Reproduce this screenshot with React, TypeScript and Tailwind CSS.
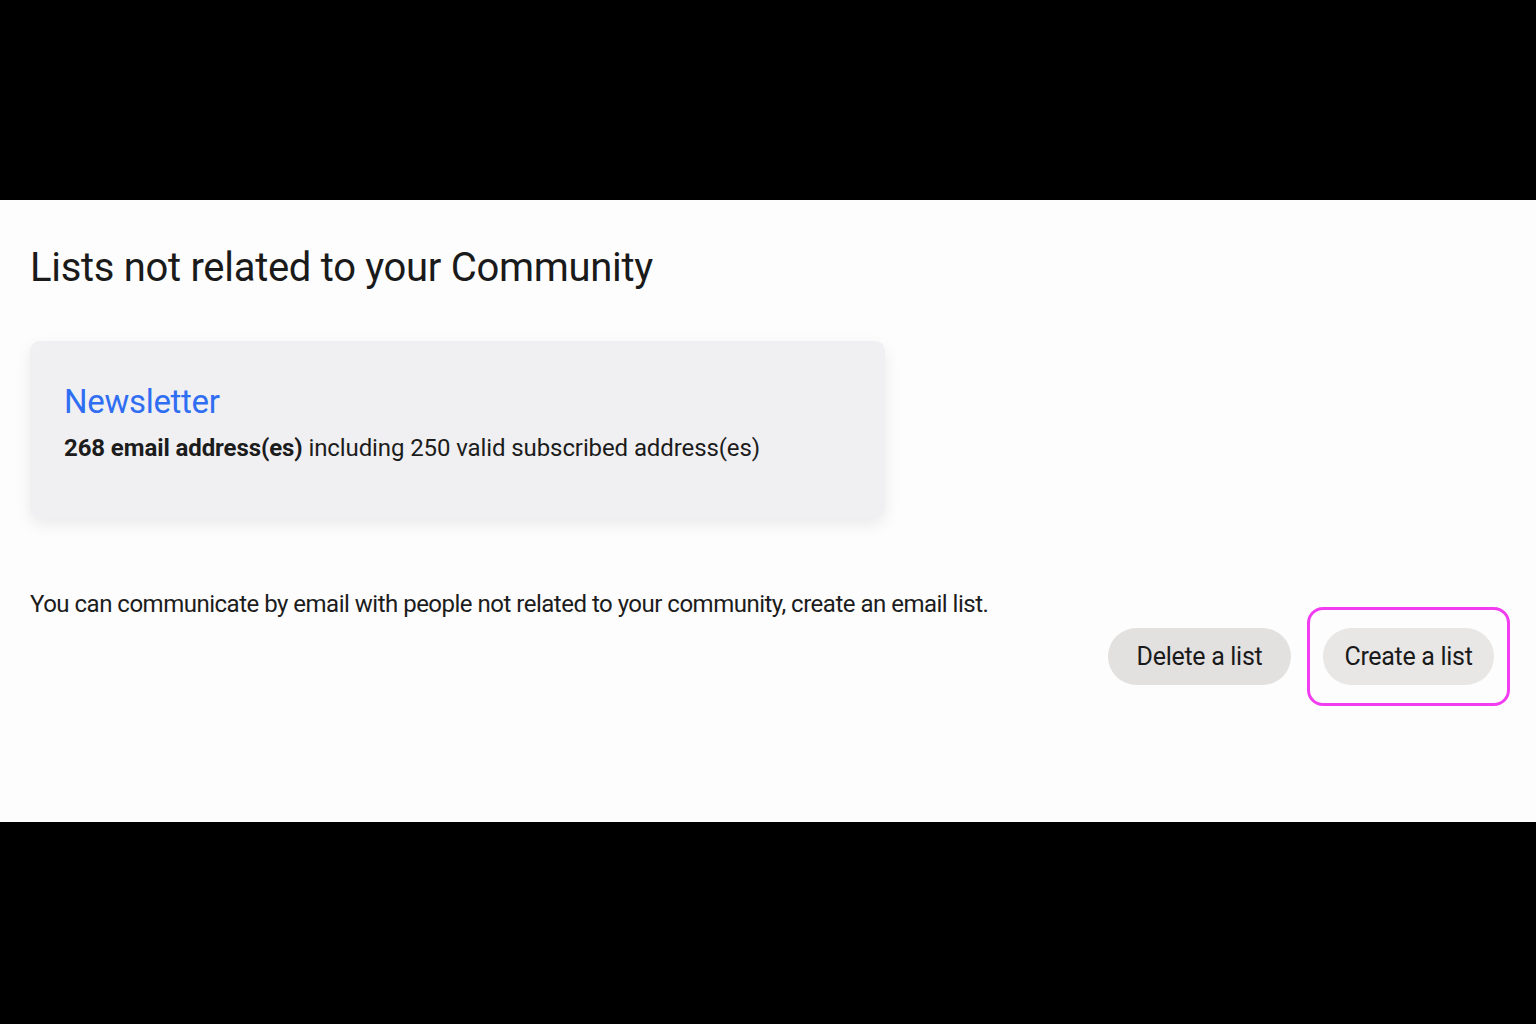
import React from 'react';

export default function App() {
  return (
    <div className="flex h-screen flex-col bg-black font-['Roboto',sans-serif]">
      <div className="h-[200px] shrink-0 bg-black" />
      <section className="flex h-[622px] shrink-0 flex-col bg-[#fdfdfd] pl-[30px] pr-[26px] pt-[44px] text-[#1c1c1c]">
        <h1 className="text-[40px] leading-[48px] tracking-[-0.3px] text-[#1a1a1a]">
          Lists not related to your Community
        </h1>
        <div className="mt-[49px] flex h-[177px] w-[855px] flex-col rounded-[10px] bg-[#f0f0f2] pl-[34px] pt-[41px] shadow-[0_6px_16px_rgba(0,0,0,0.08)]">
          <h2 className="text-[33px] leading-[40px] tracking-[-0.3px] text-[#2f6ef2]">Newsletter</h2>
          <p className="mt-[11px] text-[24px] leading-[30px] tracking-[-0.1px] text-[#1c1c1c]">
            <span className="font-bold">268 email address(es)</span> including 250 valid subscribed address(es)
          </p>
        </div>
        <p className="mt-[72px] text-[24px] leading-[28px] tracking-[-0.5px] text-[#1c1c1c]">
          You can communicate by email with people not related to your community, create an email list.
        </p>
        <div className="-mt-[11px] flex items-center justify-end gap-4">
          <button className="h-[57px] w-[183px] rounded-full bg-[#e3e1e0] text-[25px] tracking-[-0.3px] text-[#1a1a1a]">
            Delete a list
          </button>
          <div className="rounded-[16px] border-[3px] border-[#f23cf0] px-[13px] py-[18px]">
            <button className="h-[57px] w-[171px] rounded-full bg-[#e8e7e6] text-[25px] tracking-[-0.3px] text-[#1a1a1a]">
              Create a list
            </button>
          </div>
        </div>
      </section>
      <div className="flex-1 bg-black" />
    </div>
  );
}
